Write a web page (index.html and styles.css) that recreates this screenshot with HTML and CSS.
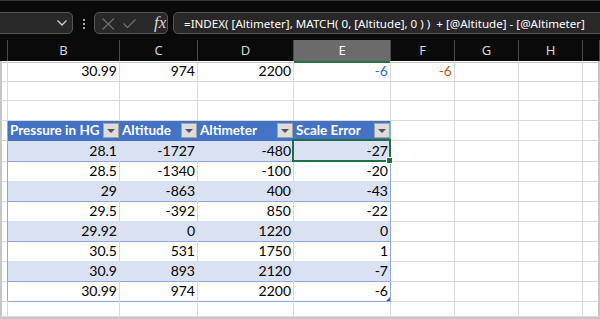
FILE: index.html
```html
<!DOCTYPE html>
<html lang="en">
<head>
  <meta charset="UTF-8" />
  <title>Scale Error</title>
  <link rel="stylesheet" href="styles.css">
</head>
<body>
  <div class="window">
    <div class="toolbar">
      <div class="namebox">
        <svg width="10" height="6" viewBox="0 0 10 6"><path d="M0.5 0.5 L5 5 L9.5 0.5" fill="none" stroke="#d0d0d0" stroke-width="1.3"/></svg>
      </div>
      <div class="dots"><span></span><span></span><span></span></div>
      <div class="fnbox">
        <svg width="13" height="12" viewBox="0 0 13 12"><path d="M0.5 0.5 L12 11.5 M12 0.5 L0.5 11.5" stroke="#707070" stroke-width="1.2" fill="none"/></svg>
        <svg width="13" height="9" viewBox="0 0 13 9"><path d="M0.5 4.5 L4.5 8.5 L12.5 0.5" stroke="#707070" stroke-width="1.2" fill="none"/></svg>
        <span class="fx">fx</span>
      </div>
      <div class="formula">=INDEX( [Altimeter], MATCH( 0, [Altitude], 0 ) )&nbsp; + [@Altitude] - [@Altimeter]</div>
    </div>

    <div class="row heads">
      <div class="g"></div>
      <div>B</div>
      <div>C</div>
      <div>D</div>
      <div class="active">E</div>
      <div>F</div>
      <div>G</div>
      <div>H</div>
      <div class="rest"></div>
    </div>

    <div class="row">
      <div class="g"></div>
      <div class="n">30.99</div>
      <div class="n">974</div>
      <div class="n">2200</div>
      <div class="n blue">-6</div>
      <div class="n orange">-6</div>
      <div></div><div></div>
      <div class="rest"></div>
    </div>
    <div class="row">
      <div class="g"></div><div></div><div></div><div></div><div></div><div></div><div></div><div></div>
      <div class="rest"></div>
    </div>
    <div class="row">
      <div class="g"></div><div></div><div></div><div></div><div></div><div></div><div></div><div></div>
      <div class="rest"></div>
    </div>

    <div class="row trow thead">
      <div class="g"></div>
      <div class="t th"><span>Pressure in HG</span><i class="drop"></i></div>
      <div class="t th"><span>Altitude</span><i class="drop"></i></div>
      <div class="t th"><span>Altimeter</span><i class="drop"></i></div>
      <div class="t th last"><span>Scale Error</span><i class="drop"></i></div>
      <div></div><div></div><div></div>
      <div class="rest"></div>
    </div>

    <div class="row trow band">
      <div class="g"></div>
      <div class="t n">28.1</div><div class="t n">-1727</div><div class="t n">-480</div><div class="t n last sel">-27</div>
      <div></div><div></div><div></div><div class="rest"></div>
    </div>
    <div class="row trow">
      <div class="g"></div>
      <div class="t n">28.5</div><div class="t n">-1340</div><div class="t n">-100</div><div class="t n last">-20</div>
      <div></div><div></div><div></div><div class="rest"></div>
    </div>
    <div class="row trow band">
      <div class="g"></div>
      <div class="t n">29</div><div class="t n">-863</div><div class="t n">400</div><div class="t n last">-43</div>
      <div></div><div></div><div></div><div class="rest"></div>
    </div>
    <div class="row trow">
      <div class="g"></div>
      <div class="t n">29.5</div><div class="t n">-392</div><div class="t n">850</div><div class="t n last">-22</div>
      <div></div><div></div><div></div><div class="rest"></div>
    </div>
    <div class="row trow band">
      <div class="g"></div>
      <div class="t n">29.92</div><div class="t n">0</div><div class="t n">1220</div><div class="t n last">0</div>
      <div></div><div></div><div></div><div class="rest"></div>
    </div>
    <div class="row trow">
      <div class="g"></div>
      <div class="t n">30.5</div><div class="t n">531</div><div class="t n">1750</div><div class="t n last">1</div>
      <div></div><div></div><div></div><div class="rest"></div>
    </div>
    <div class="row trow band">
      <div class="g"></div>
      <div class="t n">30.9</div><div class="t n">893</div><div class="t n">2120</div><div class="t n last">-7</div>
      <div></div><div></div><div></div><div class="rest"></div>
    </div>
    <div class="row trow">
      <div class="g"></div>
      <div class="t n">30.99</div><div class="t n">974</div><div class="t n">2200</div><div class="t n last resize">-6</div>
      <div></div><div></div><div></div><div class="rest"></div>
    </div>

    <div class="row short">
      <div class="g"></div><div></div><div></div><div></div><div></div><div></div><div></div><div></div>
      <div class="rest"></div>
    </div>
  </div>
</body>
</html>
```

FILE: styles.css
```css
body {
  margin: 0;
  background-color: #ffffff;
}

.window {
  width: 600px;
  height: 319px;
  overflow: hidden;
  background-color: #ffffff;
  border-bottom: 2px solid #c6c6c6;
  box-sizing: border-box;
  font-family: Lato, "Liberation Sans", sans-serif;
  font-size: 14px;
  color: #000;
}

/* formula bar */
.toolbar {
  height: 40px;
  box-sizing: border-box;
  background-color: #0a0a0a;
  border-top: 1px solid #383838;
  padding-top: 11px;
  display: flex;
  align-items: flex-start;
  overflow: hidden;
}

.namebox, .fnbox, .formula {
  height: 22px;
  box-sizing: border-box;
  background-color: #282828;
  border: 1px solid #565656;
  border-radius: 5px;
  display: flex;
  align-items: center;
  flex-shrink: 0;
}

.namebox {
  width: 82px;
  margin-left: -9px;
  justify-content: flex-end;
  padding-right: 5px;
}

.dots {
  width: 2px;
  flex-shrink: 0;
  margin: 7px 9px 0 10px;
  display: flex;
  flex-direction: column;
  gap: 2px;
}

.dots span {
  width: 2px;
  height: 2px;
  background-color: #a8a8a8;
}

.fnbox {
  width: 74px;
  padding-left: 7px;
  gap: 8px;
}

.fnbox svg:first-child {
  margin-top: 1px;
}

.fx {
  margin-left: 10px;
  font-family: "Liberation Serif", serif;
  font-style: italic;
  font-size: 17px;
  color: #d8d8d8;
  line-height: 20px;
}

.formula {
  flex: 1 1 auto;
  min-width: 0;
  overflow: hidden;
  margin-left: 5px;
  margin-right: -10px;
  padding-left: 10px;
  color: #ffffff;
  font-family: "Noto Sans", sans-serif;
  font-size: 11.6px;
  white-space: nowrap;
}

/* sheet */
.row {
  display: grid;
  grid-template-columns: 8px 112px 78px 96px 97px 64px 64px 64px 17px;
  height: 20px;
}

.row > div {
  box-sizing: border-box;
  border-right: 1px solid #dadada;
  border-bottom: 1px solid #dadada;
}

.row > .g {
  border-left: 2px solid #c6c6c6;
}

.row > .rest {
  border-right: 2px solid #c6c6c6;
}

.row.short {
  height: 16px;
}

.n {
  text-align: right;
  padding-right: 2px;
  line-height: 20px;
}

.blue {
  color: #2f6fc4;
}

.orange {
  color: #b85a18;
}

/* column letters */
.row.heads {
  height: 21px;
  background-color: #0a0a0a;
}

.row.heads > div {
  border-right: 1px solid #4a4a4a;
  border-bottom: 1px solid #c2c2c2;
  color: #d6d6d6;
  text-align: center;
  line-height: 21px;
  font-family: "Noto Sans", sans-serif;
  font-size: 13px;
}

.row.heads > .g {
  border-left: none;
}

.row.heads > .active {
  background-color: #6b6b6b;
  color: #ffffff;
  border-bottom: 2px solid #217346;
}

/* table */
.trow > .g {
  border-right-color: #8ea9db;
}

.trow > .t {
  border-bottom-color: #8ea9db;
}

.trow.band > .t {
  background-color: #d9e1f2;
  border-right-color: #d9e1f2;
}

.trow > .t.last,
.trow.band > .t.last {
  border-right-color: #8ea9db;
}

.trow.thead > .th {
  background-color: #4472c4;
  border-bottom-color: #4472c4;
  border-right-color: #4472c4;
  color: #ffffff;
  font-weight: bold;
  font-size: 13.5px;
  display: flex;
  align-items: center;
  justify-content: space-between;
  padding-left: 2px;
  line-height: 19px;
}

.trow.thead > .th.last {
  border-right-color: #8ea9db;
}

.drop {
  width: 16px;
  height: 15px;
  flex-shrink: 0;
  box-sizing: border-box;
  background-color: #dddddd;
  border: 1px solid #a3a3a3;
  display: flex;
  align-items: center;
  justify-content: center;
}

.drop::after {
  content: "";
  border-left: 4px solid transparent;
  border-right: 4px solid transparent;
  border-top: 4px solid #555555;
}

.sel {
  position: relative;
}

.sel::after {
  content: "";
  position: absolute;
  top: -2px;
  left: -2px;
  right: -1px;
  bottom: -1px;
  border: 2px solid #1e7145;
}

.sel::before {
  content: "";
  position: absolute;
  right: -3px;
  bottom: -3px;
  width: 5px;
  height: 5px;
  background-color: #1e7145;
  border: 1px solid #ffffff;
  z-index: 1;
}

.resize {
  position: relative;
}

.resize::after {
  content: "";
  position: absolute;
  right: 0;
  bottom: 0;
  border-left: 4px solid transparent;
  border-bottom: 4px solid #3e5fc8;
}
```
